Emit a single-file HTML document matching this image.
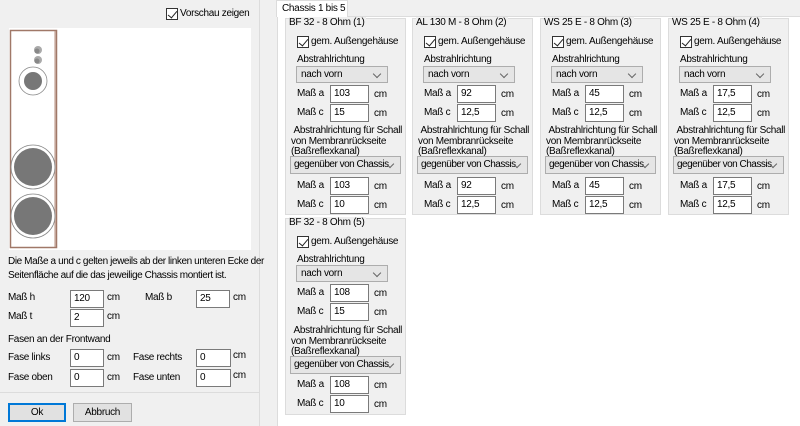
<!DOCTYPE html><html><head><meta charset="utf-8"><style>
*{box-sizing:border-box;margin:0;padding:0}
body{width:800px;height:426px;background:#f0f0f0;font-family:"Liberation Sans",sans-serif;font-size:10px;letter-spacing:-0.3px;color:#000;position:relative;overflow:hidden}
.a{position:absolute;white-space:nowrap}
.in{position:absolute;background:#fff;border:1px solid #7a7a7a;padding:1px 3px;font-size:10px;line-height:14px}
.cb{position:absolute;width:12px;height:12px;border:1px solid #333;background:#fff}
.cb:after{content:"";position:absolute;left:3px;top:0px;width:4px;height:8px;border:solid #222;border-width:0 1.3px 1.3px 0;transform:rotate(40deg)}
.co{position:absolute;background:#e5e5e5;border:1px solid #adadad;padding:1px 4px;line-height:14px;white-space:nowrap;overflow:hidden}
.co:after{content:"";position:absolute;right:7px;top:4px;width:5px;height:5px;border:solid #666;border-width:0 1px 1px 0;transform:rotate(45deg)}
.co.w{padding-left:3px;letter-spacing:-0.5px}
.g{position:absolute;width:121px;height:197px;background:#f0f0f0;border:1px solid #dcdcdc}
.g .t{position:absolute;left:3px;top:-2px;background:#f0f0f0;padding-right:2px;white-space:nowrap}
</style></head><body>
<div class="a" style="left:259px;top:0;width:1px;height:426px;background:#dcdcdc"></div>
<div class="a" style="left:0;top:392px;width:259px;height:1px;background:#dcdcdc"></div>
<div class="cb" style="left:166px;top:8px"></div><div class="a" style="left:180px;top:8px">Vorschau zeigen</div>
<div class="a" style="left:9px;top:28px;width:242px;height:222px;background:#fff"></div>
<svg class="a" style="left:0;top:0" width="260" height="260">
<rect x="10.5" y="30.5" width="46" height="217" fill="#fff" stroke="#a07868" stroke-width="1.5"/>
<line x1="55" y1="31" x2="55" y2="247" stroke="#b89080"/>
<circle cx="38" cy="50" r="4" fill="#aaa"/><circle cx="37" cy="51" r="2.5" fill="#888"/>
<circle cx="38" cy="60" r="4" fill="#aaa"/><circle cx="37" cy="61" r="2.5" fill="#888"/>
<circle cx="33" cy="81" r="14" fill="none" stroke="#888" stroke-width=".8"/><circle cx="33" cy="81" r="9" fill="#777"/>
<circle cx="33" cy="167" r="22" fill="none" stroke="#888" stroke-width=".8"/><circle cx="33" cy="167" r="19" fill="#777"/>
<circle cx="33" cy="216" r="22" fill="none" stroke="#888" stroke-width=".8"/><circle cx="33" cy="216" r="19" fill="#777"/>
</svg>
<div class="a" style="left:8px;top:255px;line-height:14px;letter-spacing:-0.4px">Die Maße a und c gelten jeweils ab der linken unteren Ecke der<br>Seitenfläche auf die das jeweilige Chassis montiert ist.</div>
<div class="a" style="left:8px;top:292px">Maß h</div><div class="in" style="left:70px;top:290px;width:34px;height:18px">120</div><div class="a" style="left:107px;top:292px">cm</div>
<div class="a" style="left:145px;top:292px">Maß b</div><div class="in" style="left:196px;top:290px;width:34px;height:18px">25</div><div class="a" style="left:233px;top:292px">cm</div>
<div class="a" style="left:8px;top:311px">Maß t</div><div class="in" style="left:70px;top:309px;width:34px;height:18px">2</div><div class="a" style="left:107px;top:311px">cm</div>
<div class="a" style="left:8px;top:334px">Fasen an der Frontwand</div>
<div class="a" style="left:8px;top:352px">Fase links</div><div class="in" style="left:70px;top:349px;width:34px;height:18px">0</div><div class="a" style="left:107px;top:352px">cm</div>
<div class="a" style="left:133px;top:352px">Fase rechts</div><div class="in" style="left:196px;top:349px;width:35px;height:18px">0</div><div class="a" style="left:233px;top:350px">cm</div>
<div class="a" style="left:8px;top:372px">Fase oben</div><div class="in" style="left:70px;top:369px;width:34px;height:18px">0</div><div class="a" style="left:107px;top:372px">cm</div>
<div class="a" style="left:133px;top:372px">Fase unten</div><div class="in" style="left:196px;top:369px;width:35px;height:18px">0</div><div class="a" style="left:233px;top:370px">cm</div>
<div class="a" style="left:8px;top:403px;width:58px;height:19px;background:#e1e1e1;border:2px solid #0078d7;text-align:center;line-height:15px">Ok</div>
<div class="a" style="left:73px;top:403px;width:59px;height:19px;background:#e1e1e1;border:1px solid #adadad;text-align:center;line-height:17px">Abbruch</div>
<div class="a" style="left:277px;top:16px;width:523px;height:410px;background:#fff;border-left:1px solid #dcdcdc;border-top:1px solid #dcdcdc"></div>
<div class="a" style="left:276px;top:0;width:72px;height:17px;background:#fff;border:1px solid #dcdcdc;border-bottom:none;padding:2px 0 0 5px">Chassis 1 bis 5</div>

<div class="g" style="left:285px;top:18px"><div class="t">BF 32 - 8 Ohm (1)</div>
<div class="cb" style="left:11px;top:17px"></div><div class="a" style="left:25px;top:17px">gem. Außengehäuse</div>
<div class="a" style="left:11px;top:35px">Abstrahlrichtung</div>
<div class="co" style="left:10px;top:47px;width:92px;height:17px">nach vorn</div>
<div class="a" style="left:11px;top:69px">Maß a</div><div class="in" style="left:44px;top:66px;width:39px;height:18px">103</div><div class="a" style="left:88px;top:70px">cm</div>
<div class="a" style="left:11px;top:88px">Maß c</div><div class="in" style="left:44px;top:85px;width:39px;height:18px">15</div><div class="a" style="left:88px;top:89px">cm</div>
<div class="a" style="left:5px;top:107px;line-height:10.5px">&nbsp;Abstrahlrichtung für Schall<br>von Membranrückseite<br>(Baßreflexkanal)</div>
<div class="co w" style="left:4px;top:137px;width:111px;height:18px">gegenüber von Chassis</div>
<div class="a" style="left:11px;top:161px">Maß a</div><div class="in" style="left:44px;top:158px;width:39px;height:18px">103</div><div class="a" style="left:88px;top:162px">cm</div>
<div class="a" style="left:11px;top:180px">Maß c</div><div class="in" style="left:44px;top:177px;width:39px;height:18px">10</div><div class="a" style="left:88px;top:181px">cm</div>
</div>
<div class="g" style="left:412px;top:18px"><div class="t">AL 130 M - 8 Ohm (2)</div>
<div class="cb" style="left:11px;top:17px"></div><div class="a" style="left:25px;top:17px">gem. Außengehäuse</div>
<div class="a" style="left:11px;top:35px">Abstrahlrichtung</div>
<div class="co" style="left:10px;top:47px;width:92px;height:17px">nach vorn</div>
<div class="a" style="left:11px;top:69px">Maß a</div><div class="in" style="left:44px;top:66px;width:39px;height:18px">92</div><div class="a" style="left:88px;top:70px">cm</div>
<div class="a" style="left:11px;top:88px">Maß c</div><div class="in" style="left:44px;top:85px;width:39px;height:18px">12,5</div><div class="a" style="left:88px;top:89px">cm</div>
<div class="a" style="left:5px;top:107px;line-height:10.5px">&nbsp;Abstrahlrichtung für Schall<br>von Membranrückseite<br>(Baßreflexkanal)</div>
<div class="co w" style="left:4px;top:137px;width:111px;height:18px">gegenüber von Chassis</div>
<div class="a" style="left:11px;top:161px">Maß a</div><div class="in" style="left:44px;top:158px;width:39px;height:18px">92</div><div class="a" style="left:88px;top:162px">cm</div>
<div class="a" style="left:11px;top:180px">Maß c</div><div class="in" style="left:44px;top:177px;width:39px;height:18px">12,5</div><div class="a" style="left:88px;top:181px">cm</div>
</div>
<div class="g" style="left:540px;top:18px"><div class="t">WS 25 E - 8 Ohm (3)</div>
<div class="cb" style="left:11px;top:17px"></div><div class="a" style="left:25px;top:17px">gem. Außengehäuse</div>
<div class="a" style="left:11px;top:35px">Abstrahlrichtung</div>
<div class="co" style="left:10px;top:47px;width:92px;height:17px">nach vorn</div>
<div class="a" style="left:11px;top:69px">Maß a</div><div class="in" style="left:44px;top:66px;width:39px;height:18px">45</div><div class="a" style="left:88px;top:70px">cm</div>
<div class="a" style="left:11px;top:88px">Maß c</div><div class="in" style="left:44px;top:85px;width:39px;height:18px">12,5</div><div class="a" style="left:88px;top:89px">cm</div>
<div class="a" style="left:5px;top:107px;line-height:10.5px">&nbsp;Abstrahlrichtung für Schall<br>von Membranrückseite<br>(Baßreflexkanal)</div>
<div class="co w" style="left:4px;top:137px;width:111px;height:18px">gegenüber von Chassis</div>
<div class="a" style="left:11px;top:161px">Maß a</div><div class="in" style="left:44px;top:158px;width:39px;height:18px">45</div><div class="a" style="left:88px;top:162px">cm</div>
<div class="a" style="left:11px;top:180px">Maß c</div><div class="in" style="left:44px;top:177px;width:39px;height:18px">12,5</div><div class="a" style="left:88px;top:181px">cm</div>
</div>
<div class="g" style="left:668px;top:18px"><div class="t">WS 25 E - 8 Ohm (4)</div>
<div class="cb" style="left:11px;top:17px"></div><div class="a" style="left:25px;top:17px">gem. Außengehäuse</div>
<div class="a" style="left:11px;top:35px">Abstrahlrichtung</div>
<div class="co" style="left:10px;top:47px;width:92px;height:17px">nach vorn</div>
<div class="a" style="left:11px;top:69px">Maß a</div><div class="in" style="left:44px;top:66px;width:39px;height:18px">17,5</div><div class="a" style="left:88px;top:70px">cm</div>
<div class="a" style="left:11px;top:88px">Maß c</div><div class="in" style="left:44px;top:85px;width:39px;height:18px">12,5</div><div class="a" style="left:88px;top:89px">cm</div>
<div class="a" style="left:5px;top:107px;line-height:10.5px">&nbsp;Abstrahlrichtung für Schall<br>von Membranrückseite<br>(Baßreflexkanal)</div>
<div class="co w" style="left:4px;top:137px;width:111px;height:18px">gegenüber von Chassis</div>
<div class="a" style="left:11px;top:161px">Maß a</div><div class="in" style="left:44px;top:158px;width:39px;height:18px">17,5</div><div class="a" style="left:88px;top:162px">cm</div>
<div class="a" style="left:11px;top:180px">Maß c</div><div class="in" style="left:44px;top:177px;width:39px;height:18px">12,5</div><div class="a" style="left:88px;top:181px">cm</div>
</div>
<div class="g" style="left:285px;top:218px"><div class="t">BF 32 - 8 Ohm (5)</div>
<div class="cb" style="left:11px;top:17px"></div><div class="a" style="left:25px;top:17px">gem. Außengehäuse</div>
<div class="a" style="left:11px;top:35px">Abstrahlrichtung</div>
<div class="co" style="left:10px;top:46px;width:92px;height:17px">nach vorn</div>
<div class="a" style="left:11px;top:68px">Maß a</div><div class="in" style="left:44px;top:65px;width:39px;height:18px">108</div><div class="a" style="left:88px;top:69px">cm</div>
<div class="a" style="left:11px;top:87px">Maß c</div><div class="in" style="left:44px;top:84px;width:39px;height:18px">15</div><div class="a" style="left:88px;top:88px">cm</div>
<div class="a" style="left:5px;top:107px;line-height:10.5px">&nbsp;Abstrahlrichtung für Schall<br>von Membranrückseite<br>(Baßreflexkanal)</div>
<div class="co w" style="left:4px;top:137px;width:111px;height:18px">gegenüber von Chassis</div>
<div class="a" style="left:11px;top:160px">Maß a</div><div class="in" style="left:44px;top:157px;width:39px;height:18px">108</div><div class="a" style="left:88px;top:161px">cm</div>
<div class="a" style="left:11px;top:179px">Maß c</div><div class="in" style="left:44px;top:176px;width:39px;height:18px">10</div><div class="a" style="left:88px;top:180px">cm</div>
</div>
</body></html>
